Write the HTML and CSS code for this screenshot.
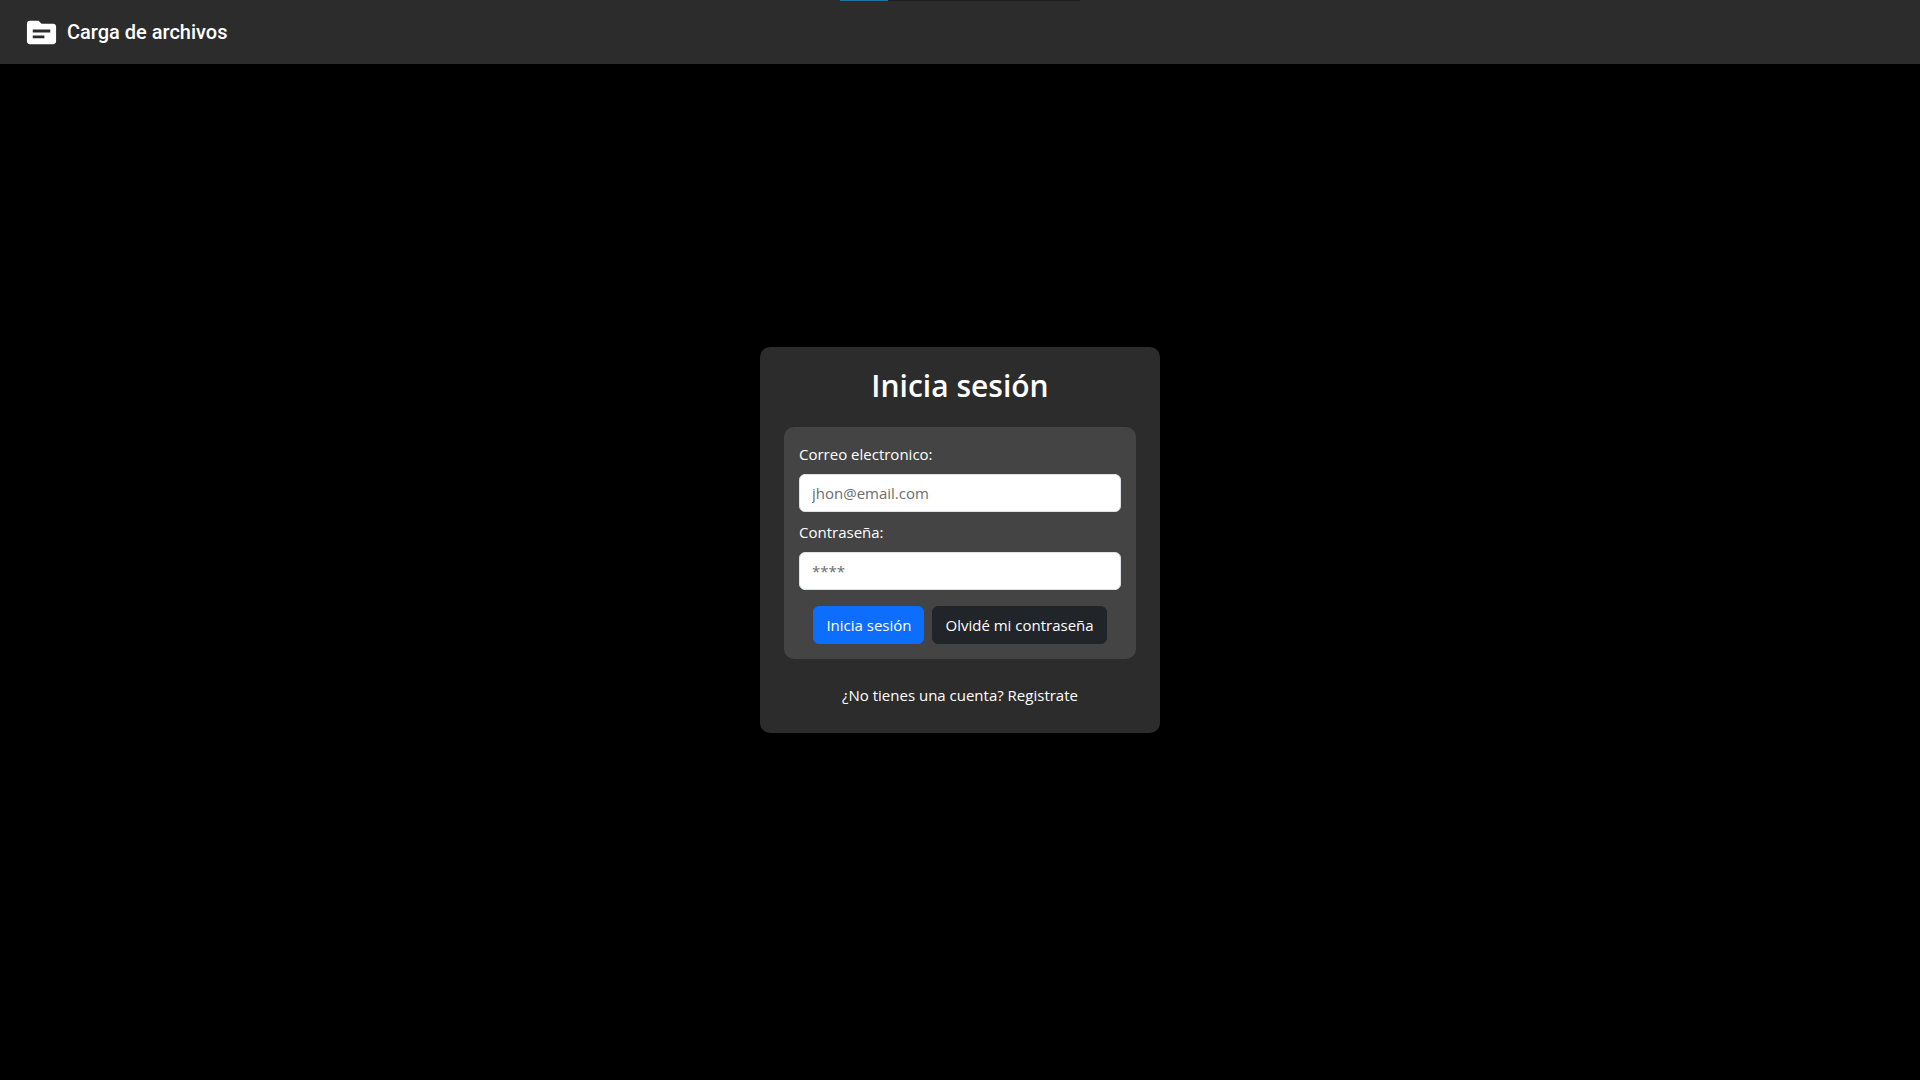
FILE: index.html
```html
<!DOCTYPE html>
<html lang="es">
<head>
  <meta charset="utf-8">
  <meta name="viewport" content="width=device-width, initial-scale=1">
  <title>Carga de archivos</title>
  <link rel="stylesheet" href="styles.css">
</head>
<body>
  <header class="navbar">
    <a class="brand" href="#">
      <svg class="brand-icon" viewBox="0 0 24 24" aria-hidden="true">
        <path fill="currentColor" d="M20 6h-8l-2-2H4c-1.1 0-1.99.9-1.99 2L2 18c0 1.1.9 2 2 2h16c1.1 0 2-.9 2-2V8c0-1.1-.9-2-2-2zm-6 10H6v-2h8v2zm4-4H6v-2h12v2z"/>
      </svg>
      <span>Carga de archivos</span>
    </a>
    <div class="top-progress"><div class="top-progress-fill"></div></div>
  </header>
  <main class="page">
    <section class="card">
      <h1 class="title">Inicia sesión</h1>
      <form class="form">
        <label class="label" for="email">Correo electronico:</label>
        <input class="input" id="email" type="email" placeholder="jhon@email.com">
        <label class="label" for="password">Contraseña:</label>
        <input class="input" id="password" type="password" placeholder="****">
        <div class="actions">
          <button class="btn btn-primary" type="submit">Inicia sesión</button>
          <button class="btn btn-dark" type="button">Olvidé mi contraseña</button>
        </div>
      </form>
      <a class="register" href="#">¿No tienes una cuenta? Registrate</a>
    </section>
  </main>
</body>
</html>
```

FILE: styles.css
```css
* {
  box-sizing: border-box;
}

body {
  margin: 0;
  min-height: 100vh;
  display: flex;
  flex-direction: column;
  background: #000;
  color: #fff;
  font-family: "Segoe UI", "Open Sans", "Noto Sans", sans-serif;
  font-size: 15px;
  line-height: 24px;
}

.navbar {
  position: relative;
  display: flex;
  align-items: center;
  height: 64px;
  padding: 0 24px;
  background: #2c2c2c;
}

.brand {
  display: flex;
  align-items: center;
  gap: 8px;
  color: #fff;
  font-family: Roboto, sans-serif;
  font-size: 20px;
  font-weight: 500;
  text-decoration: none;
}

.brand-icon {
  width: 35px;
  height: 35px;
}

/* Thin loading bar over the top edge of the header */
.top-progress {
  position: absolute;
  top: 0;
  left: 50%;
  width: 240px;
  height: 1px;
  margin-left: -120px;
  background: #1f1f1f;
}

.top-progress-fill {
  width: 20%;
  height: 100%;
  background: #2274a5;
}

.page {
  flex: 1;
  display: flex;
  align-items: center;
  justify-content: center;
  padding-bottom: 64px;
}

.card {
  display: flex;
  flex-direction: column;
  width: 100%;
  max-width: 400px;
  padding: 20px 24px 26px;
  border-radius: 10px;
  background: #2c2c2c;
}

.title {
  margin: 0 0 22px;
  font-size: 30px;
  font-weight: 600;
  line-height: 38px;
  text-align: center;
}

.form {
  display: flex;
  flex-direction: column;
  gap: 8px;
  padding: 15px;
  border-radius: 10px;
  background: #444;
}

.input {
  width: 100%;
  height: 38px;
  padding: 6px 12px;
  border: 1px solid #dee2e6;
  border-radius: 6px;
  background: #fff;
  color: #212529;
  font: inherit;
}

.input::placeholder {
  color: #6a6d70;
  opacity: 1;
}

.actions {
  display: flex;
  justify-content: center;
  gap: 8px;
  margin-top: 8px;
}

.btn {
  height: 38px;
  padding: 0 12px;
  border: 1px solid transparent;
  border-radius: 6px;
  color: #fff;
  font: inherit;
  cursor: pointer;
}

.btn-primary {
  border-color: #0d6efd;
  background: #0d6efd;
}

.btn-dark {
  border-color: #212529;
  background: #212529;
}

.register {
  margin-top: 24px;
  color: #fff;
  text-align: center;
  text-decoration: none;
}
```
